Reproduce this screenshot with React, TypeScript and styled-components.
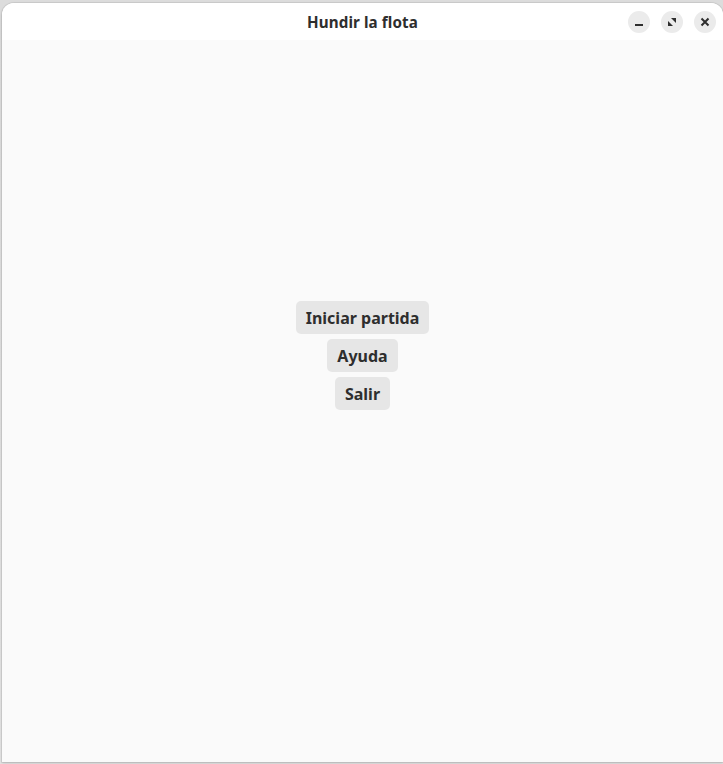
import React from "react";
import styled, { createGlobalStyle } from "styled-components";

const Global = createGlobalStyle`
  html, body { margin: 0; padding: 0; height: 100%; }
  body {
    background: #e2e2e2;
    font-family: "Noto Sans", "Open Sans", sans-serif;
    overflow: hidden;
  }
  #root { height: 100%; }
`;

const Desktop = styled.div`
  height: 764px;
  width: 723px;
  box-sizing: border-box;
  padding: 3px 0 2px 2px;
  display: flex;
  background: linear-gradient(#dcdcdc, #e4e4e4);
`;

const Window = styled.div`
  flex: 1;
  display: flex;
  flex-direction: column;
  border-radius: 12px 12px 0 0;
  overflow: hidden;
  background: #fafafa;
  box-shadow: 0 0 0 1px rgba(0, 0, 0, 0.06), 0 1px 3px rgba(0, 0, 0, 0.18);
`;

const HeaderBar = styled.div`
  height: 37px;
  flex: none;
  background: #ffffff;
  display: grid;
  grid-template-columns: 1fr auto 1fr;
  align-items: center;
  padding: 0 7px 0 6px;
`;

const Title = styled.div`
  grid-column: 2;
  font-weight: 700;
  font-size: 15.2px;
  color: #2e2e2e;
  letter-spacing: 0.1px;
  margin-left: 1px;
`;

const Controls = styled.div`
  grid-column: 3;
  justify-self: end;
  display: flex;
  gap: 11px;
`;

const CtrlButton = styled.div`
  width: 22px;
  height: 22px;
  border-radius: 50%;
  background: #ebebeb;
  display: flex;
  align-items: center;
  justify-content: center;
  color: #2e2e2e;
`;

const Content = styled.div`
  flex: 1;
  display: flex;
  flex-direction: column;
  align-items: center;
  padding-top: 261px;
  gap: 5px;
`;

const MenuButton = styled.button`
  height: 33px;
  padding: 0 10px;
  border: none;
  border-radius: 5px;
  background: #e6e6e6;
  color: #2e2e2e;
  font-family: "Noto Sans", "Open Sans", sans-serif;
  font-weight: 700;
  font-size: 16px;
  cursor: pointer;
`;

const MinIcon = () => (
  <svg width="10" height="10" viewBox="0 0 10 10">
    <rect x="1" y="7" width="8" height="2" fill="currentColor" />
  </svg>
);

const MaxIcon = () => (
  <svg width="10" height="10" viewBox="0 0 10 10">
    <path d="M4 1 H9 V6 Z" fill="currentColor" />
    <path d="M1 4 V9 H6 Z" fill="currentColor" />
  </svg>
);

const CloseIcon = () => (
  <svg width="10" height="10" viewBox="0 0 10 10">
    <path d="M1.5 1.5 L8.5 8.5 M8.5 1.5 L1.5 8.5" stroke="currentColor" strokeWidth="2" />
  </svg>
);

export default function App() {
  return (
    <>
      <Global />
      <Desktop>
        <Window>
          <HeaderBar>
            <Title>Hundir la flota</Title>
            <Controls>
              <CtrlButton><MinIcon /></CtrlButton>
              <CtrlButton><MaxIcon /></CtrlButton>
              <CtrlButton><CloseIcon /></CtrlButton>
            </Controls>
          </HeaderBar>
          <Content>
            <MenuButton>Iniciar partida</MenuButton>
            <MenuButton>Ayuda</MenuButton>
            <MenuButton>Salir</MenuButton>
          </Content>
        </Window>
      </Desktop>
    </>
  );
}
